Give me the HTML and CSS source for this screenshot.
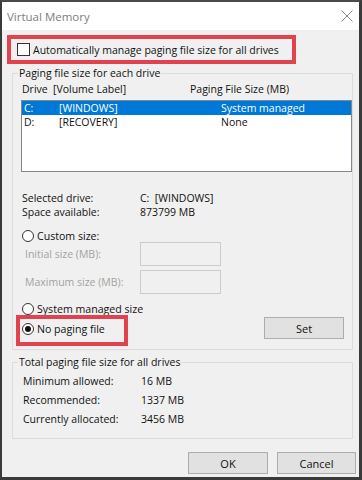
FILE: index.html
```html
<!DOCTYPE html>
<html lang="en">
<head>
  <meta charset="UTF-8" />
  <meta name="viewport" content="width=device-width, initial-scale=1.0"/>
  <title>Virtual Memory</title>
  <link rel="stylesheet" href="styles.css">
</head>
<body>
  <div class="dialog">
    <div class="titlebar">
      <span class="title">Virtual Memory</span>
      <svg class="close" width="12" height="12" viewBox="0 0 12 12">
        <path d="M0.5 0.5 L11.5 11.5 M11.5 0.5 L0.5 11.5" stroke="#8a8a8a" stroke-width="1" fill="none"/>
      </svg>
    </div>

    <div class="content">
      <label class="highlight auto-box">
        <span class="checkbox"></span>
        <span>Automatically manage paging file size for all drives</span>
      </label>

      <fieldset class="group">
        <legend>Paging file size for each drive</legend>
        <div class="list-head">
          <span class="col-drive">Drive</span>
          <span class="col-label">[Volume Label]</span>
          <span class="col-size">Paging File Size (MB)</span>
        </div>
        <div class="listbox">
          <div class="list-row selected">
            <span class="cell-drive">C:</span>
            <span class="cell-label">[WINDOWS]</span>
            <span class="cell-size">System managed</span>
          </div>
          <div class="list-row">
            <span class="cell-drive">D:</span>
            <span class="cell-label">[RECOVERY]</span>
            <span class="cell-size">None</span>
          </div>
        </div>

        <div class="info">
          <div class="info-row"><span class="info-key">Selected drive:</span><span>C:&nbsp; [WINDOWS]</span></div>
          <div class="info-row"><span class="info-key">Space available:</span><span>873799 MB</span></div>
        </div>

        <div class="radio-row custom">
          <span class="radio"></span><span>Custom size:</span>
        </div>
        <div class="size-row first">
          <span class="size-key">Initial size (MB):</span>
          <span class="size-input"></span>
        </div>
        <div class="size-row">
          <span class="size-key">Maximum size (MB):</span>
          <span class="size-input"></span>
        </div>
        <div class="radio-row system">
          <span class="radio"></span><span>System managed size</span>
        </div>
        <div class="last-row">
          <div class="highlight nopage-box">
            <span class="radio checked"></span><span>No paging file</span>
          </div>
          <button class="btn set-btn">Set</button>
        </div>
      </fieldset>

      <fieldset class="group totals">
        <legend>Total paging file size for all drives</legend>
        <div class="total-row"><span class="info-key">Minimum allowed:</span><span>16 MB</span></div>
        <div class="total-row"><span class="info-key">Recommended:</span><span>1337 MB</span></div>
        <div class="total-row"><span class="info-key">Currently allocated:</span><span>3456 MB</span></div>
      </fieldset>

      <div class="actions">
        <button class="btn ok-btn">OK</button>
        <button class="btn cancel-btn">Cancel</button>
      </div>
    </div>
  </div>
</body>
</html>
```

FILE: styles.css
```css
body {
  margin: 0;
  padding: 0;
  background-color: #f0f0f0;
  font-family: 'Open Sans', 'Noto Sans', sans-serif;
  font-size: 10.5px;
  color: #111;
}

.dialog {
  width: 362px;
  height: 480px;
  box-sizing: border-box;
  border-top: 2px solid #4a4a4a;
  border-left: 2px solid #3a3a3a;
  border-right: 3px solid #3a3a3a;
  border-bottom: 3px solid #3a3a3a;
  background-color: #f0f0f0;
  display: flex;
  flex-direction: column;
}

.titlebar {
  height: 28px;
  background-color: #fff;
  display: flex;
  align-items: center;
  padding: 0 4px 0 5px;
}

.title {
  font-size: 11.5px;
  color: #7d7d7d;
  flex: 1;
}

.close {
  margin-right: 2px;
}

.content {
  flex: 1;
  display: flex;
  flex-direction: column;
}

.highlight {
  border: 4px solid #e2424e;
  box-sizing: border-box;
}

.auto-box {
  margin: 5px 0 0 5px;
  width: 289px;
  height: 29px;
  display: flex;
  align-items: center;
  padding-left: 6px;
  font-size: 10.5px;
  white-space: nowrap;
}

.checkbox {
  width: 13px;
  height: 13px;
  box-sizing: border-box;
  border: 1px solid #333;
  background-color: #fff;
  margin-right: 3px;
  flex-shrink: 0;
}

.group {
  margin: 2px 6px 0 10px;
  padding: 0;
  border: 1px solid #dcdcdc;
  min-width: 0;
}

.group legend {
  margin-left: 5px;
  padding: 0 1px;
  line-height: 14px;
}

.list-head {
  display: flex;
  height: 14px;
  line-height: 14px;
  margin: 2px 0 0 9px;
}

.col-drive { width: 31px; }
.col-label { width: 137px; }

.listbox {
  margin: 4px 0 0 8px;
  height: 72px;
  box-sizing: border-box;
  border: 1px solid #828790;
  background-color: #fff;
}

.list-row {
  display: flex;
  height: 14px;
  line-height: 14px;
  padding-left: 2px;
}

.list-row.selected {
  background-color: #0078d7;
  color: #fff;
}

.cell-drive { width: 35px; }
.cell-label { width: 162px; }

.info {
  margin: 19px 0 0 9px;
}

.info-row {
  display: flex;
  height: 14px;
  line-height: 14px;
}

.info-key {
  width: 118px;
}

.radio-row {
  display: flex;
  align-items: center;
  height: 13px;
  margin-left: 9px;
  font-size: 10.6px;
}

.radio-row.custom {
  margin-top: 10px;
}

.radio-row.system {
  margin-top: 8px;
}

.radio {
  width: 12px;
  height: 12px;
  box-sizing: border-box;
  border: 1px solid #333;
  border-radius: 50%;
  background-color: #fff;
  margin-right: 3px;
  display: flex;
  align-items: center;
  justify-content: center;
  flex-shrink: 0;
}

.radio.checked::after {
  content: '';
  width: 6px;
  height: 6px;
  border-radius: 50%;
  background-color: #111;
}

.size-row {
  display: flex;
  align-items: center;
  height: 24px;
  margin: 4px 0 0 12px;
  color: #a3a3a3;
}

.size-row.first {
  margin-top: 0;
}

.size-key {
  width: 115px;
}

.size-input {
  width: 81px;
  height: 24px;
  box-sizing: border-box;
  border: 1px solid #cccccc;
  background-color: #f0f0f0;
}

.last-row {
  display: flex;
  align-items: flex-start;
  padding-bottom: 3px;
}

.nopage-box {
  margin-left: 3px;
  width: 112px;
  height: 31px;
  display: flex;
  align-items: center;
  padding: 0 0 3px 2px;
  font-size: 10.6px;
}

.btn {
  font-family: inherit;
  font-size: 11px;
  color: #111;
  background-color: #e1e1e1;
  border: 1px solid #adadad;
  height: 22px;
  padding: 0;
}

.set-btn {
  width: 80px;
  margin: 2px 8px 0 auto;
}

.totals {
  margin-top: 5px;
  padding-bottom: 9px;
}

.totals .total-row:first-of-type {
  margin-top: 3px;
}

.total-row {
  display: flex;
  height: 19px;
  line-height: 19px;
  margin-left: 10px;
}

.actions {
  display: flex;
  justify-content: flex-end;
  margin: 13px 3px 0 0;
}

.ok-btn {
  width: 80px;
  margin-right: 9px;
}

.cancel-btn {
  width: 79px;
}
```
